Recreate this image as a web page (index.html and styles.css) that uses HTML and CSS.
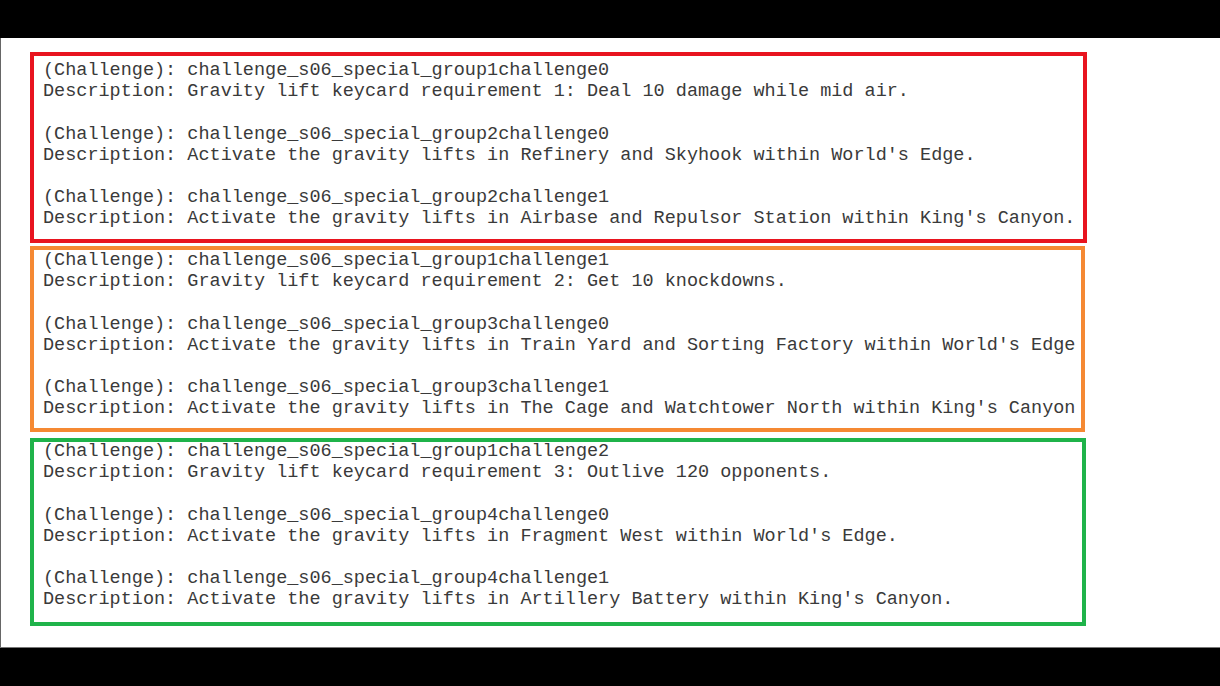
FILE: index.html
```html
<!DOCTYPE html>
<html lang="en">
<head>
    <meta charset="UTF-8">
    <meta name="viewport" content="width=device-width, initial-scale=1.0">
    <title>Gravity Lift Challenges</title>
    <link rel="stylesheet" href="styles.css">
</head>
<body>
    <div class="bar"></div>
    <div class="page">
        <div class="box red">
<pre class="log">(Challenge): challenge_s06_special_group1challenge0
Description: Gravity lift keycard requirement 1: Deal 10 damage while mid air.

(Challenge): challenge_s06_special_group2challenge0
Description: Activate the gravity lifts in Refinery and Skyhook within World's Edge.

(Challenge): challenge_s06_special_group2challenge1
Description: Activate the gravity lifts in Airbase and Repulsor Station within King's Canyon.</pre>
        </div>
        <div class="box orange">
<pre class="log">(Challenge): challenge_s06_special_group1challenge1
Description: Gravity lift keycard requirement 2: Get 10 knockdowns.

(Challenge): challenge_s06_special_group3challenge0
Description: Activate the gravity lifts in Train Yard and Sorting Factory within World's Edge

(Challenge): challenge_s06_special_group3challenge1
Description: Activate the gravity lifts in The Cage and Watchtower North within King's Canyon</pre>
        </div>
        <div class="box green">
<pre class="log">(Challenge): challenge_s06_special_group1challenge2
Description: Gravity lift keycard requirement 3: Outlive 120 opponents.

(Challenge): challenge_s06_special_group4challenge0
Description: Activate the gravity lifts in Fragment West within World's Edge.

(Challenge): challenge_s06_special_group4challenge1
Description: Activate the gravity lifts in Artillery Battery within King's Canyon.</pre>
        </div>
    </div>
    <div class="bar bottom"></div>
</body>
</html>
```

FILE: styles.css
```css
body {
    margin: 0;
    background: #000;
    height: 686px;
    overflow: hidden;
}
.bar {
    height: 38px;
    background: #000;
}
.bar.bottom {
    border-top: 1px solid #777;
}
.page {
    background: #fff;
    height: 609px;
    border-left: 1px solid #666;
    padding: 14px 0 0 29px;
    box-sizing: border-box;
}
.box {
    width: 1057px;
    box-sizing: border-box;
    border: 4px solid;
    padding: 0 0 0 9px;
    overflow: hidden;
}
.log {
    margin: 0;
    font-family: "Liberation Mono", "Courier New", monospace;
    font-size: 18.5px;
    line-height: 21.2px;
    color: #3a3a3a;
    white-space: pre;
}
.red {
    border-color: #e8141f;
    height: 191px;
}
.red .log {
    margin-top: 4px;
}
.orange {
    border-color: #f58933;
    margin-top: 3px;
    height: 186px;
    width: 1055px;
}
.orange .log {
    margin-top: 0;
}
.green {
    border-color: #1fb34a;
    margin-top: 6px;
    height: 188px;
    width: 1056px;
}
.green .log {
    margin-top: -1px;
}
```
